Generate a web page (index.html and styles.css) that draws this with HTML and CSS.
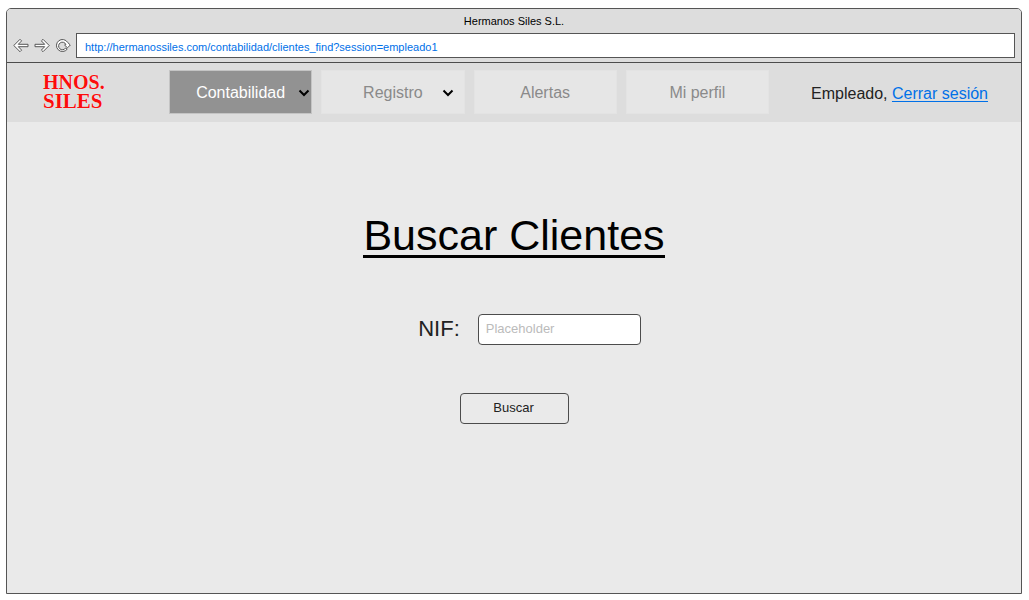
FILE: index.html
```html
<!DOCTYPE html>
<html lang="es">
<head>
<meta charset="utf-8">
<meta name="viewport" content="width=device-width, initial-scale=1">
<title>Hermanos Siles S.L.</title>
<link rel="stylesheet" href="styles.css">
</head>
<body>
<div class="window">
  <div class="chrome">
    <div class="chrome-title">Hermanos Siles S.L.</div>
    <div class="toolbar">
      <button class="tool" type="button" aria-label="Atrás">
        <svg width="16" height="16" viewBox="0 0 16 16"><path d="M.8 7.500 7 1.300l1.600 1.600-3.300 3.400H15v2.400H5.300l3.300 3.400L7 13.700z"/></svg>
      </button>
      <button class="tool" type="button" aria-label="Adelante">
        <svg width="16" height="16" viewBox="0 0 16 16"><path d="M15.200 7.500 9 1.300 7.400 2.900l3.300 3.400H1v2.400h9.700l-3.300 3.400L9 13.700z"/></svg>
      </button>
      <button class="tool" type="button" aria-label="Recargar">
        <svg width="16" height="16" viewBox="0 0 16 16"><path d="M12.200 11.200A6 6 0 1 1 12.600 4.400l2.700 2.600-2.800 2.800-2.900-2.700 1.300-.6A3.800 3.800 0 1 0 10.600 10z"/></svg>
      </button>
      <input class="address" type="text" aria-label="Dirección" value="http://hermanossiles.com/contabilidad/clientes_find?session=empleado1">
    </div>
  </div>
  <header class="header">
    <div class="logo">
      <span class="logo-top">HNOS.</span>
      <span class="logo-bottom">SILES</span>
    </div>
    <nav class="menu">
      <button class="menu-item active" type="button">Contabilidad
        <svg class="chevron" width="12" height="8" viewBox="0 0 12 8"><path d="M1.500 1.500 6 6l4.500-4.500"/></svg>
      </button>
      <button class="menu-item" type="button">Registro
        <svg class="chevron inset" width="12" height="8" viewBox="0 0 12 8"><path d="M1.500 1.500 6 6l4.500-4.500"/></svg>
      </button>
      <button class="menu-item" type="button">Alertas</button>
      <button class="menu-item" type="button">Mi perfil</button>
    </nav>
    <div class="user">Empleado, <a href="#">Cerrar sesión</a></div>
  </header>
  <main class="main">
    <h1 class="heading">Buscar Clientes</h1>
    <form class="search">
      <div class="field">
        <label class="label" for="nif">NIF:</label>
        <input class="input" id="nif" type="text" placeholder="Placeholder">
      </div>
      <button class="submit" type="button">Buscar</button>
    </form>
  </main>
</div>
</body>
</html>
```
FILE: styles.css
```css
* {
  box-sizing: border-box;
}

body {
  margin: 0;
  padding: 8px 7px 6px 6px;
  background: #fff;
  color: #222;
  font-family: "Liberation Sans", Arial, sans-serif;
}

button,
input {
  font-family: inherit;
}

.window {
  display: flex;
  flex-direction: column;
  min-height: calc(100vh - 14px);
  overflow: hidden;
  border: 1px solid #555;
  border-radius: 5px 5px 0 0;
  background: #eaeaea;
}

.chrome {
  padding: 6px 6px 4px;
  border-bottom: 1px solid #4c4c4c;
  background: #ddd;
}

.chrome-title {
  color: #000;
  font-size: 11px;
  line-height: 13px;
  text-align: center;
}

.toolbar {
  display: flex;
  align-items: center;
  gap: 5px;
  margin-top: 5px;
}

.tool {
  display: flex;
  padding: 0;
  border: 0;
  background: none;
}

.tool svg {
  fill: #fff;
  stroke: #555;
  stroke-width: 1;
  stroke-linejoin: round;
}

.address {
  flex: 1;
  min-width: 0;
  height: 25px;
  padding: 2px 8px 0;
  border: 1px solid #555;
  border-radius: 0;
  background: #fff;
  color: #0070e8;
  font-size: 11px;
}

.header {
  display: flex;
  align-items: center;
  height: 59px;
  padding: 0 33px 2px 36px;
  background: #ddd;
}

.logo {
  display: flex;
  flex-direction: column;
  width: 64px;
  color: #fb0d0d;
  font-family: "Liberation Serif", "Times New Roman", serif;
  font-weight: 700;
  line-height: 19px;
  text-shadow: 0 0 1px #fff;
}

.logo-top {
  font-size: 20px;
}

.logo-bottom {
  font-size: 21px;
}

.menu {
  display: grid;
  flex: 1;
  grid-template-columns: repeat(4, 1fr);
  gap: 9px;
  margin: 0 42px 0 62px;
}

.menu-item {
  position: relative;
  height: 44px;
  padding: 2px 0 0;
  border: 1px solid #e3e3e3;
  background: #e6e6e6;
  color: #8a8a8a;
  font-size: 16px;
}

.menu-item.active {
  border-color: #c4c4c4;
  background: #929292;
  color: #fff;
}

.chevron {
  position: absolute;
  top: 18px;
  right: 1px;
  fill: none;
  stroke: #000;
  stroke-width: 2;
}

.chevron.inset {
  right: 10px;
}

.user {
  padding-top: 4px;
  color: #222;
  font-size: 16px;
  line-height: 20px;
  white-space: nowrap;
}

.user a {
  color: #0070e8;
  text-underline-offset: 2px;
}

.main {
  display: flex;
  flex: 1;
  flex-direction: column;
  align-items: center;
  padding: 94px 20px 20px;
}

.heading {
  margin: 0;
  border-bottom: 3px solid #000;
  color: #000;
  font-size: 43px;
  font-weight: 400;
  line-height: 39px;
}

.search {
  display: flex;
  flex-direction: column;
  align-items: center;
  gap: 48px;
  margin-top: 56px;
}

.field {
  display: flex;
  align-items: center;
  gap: 18px;
  padding-left: 31px;
}

.label {
  padding-bottom: 2px;
  font-size: 22px;
  line-height: 26px;
}

.input {
  width: 163px;
  height: 31px;
  padding: 0 7px 3px;
  border: 1px solid #4c4c4c;
  border-radius: 4px;
  background: #fff;
  color: #222;
  font-size: 13px;
}

.input::placeholder {
  color: #bbb;
}

.submit {
  width: 109px;
  height: 31px;
  padding: 0 1px 3px 0;
  border: 1px solid #4c4c4c;
  border-radius: 4px;
  background: #eaeaea;
  color: #222;
  font-size: 13px;
}
```
